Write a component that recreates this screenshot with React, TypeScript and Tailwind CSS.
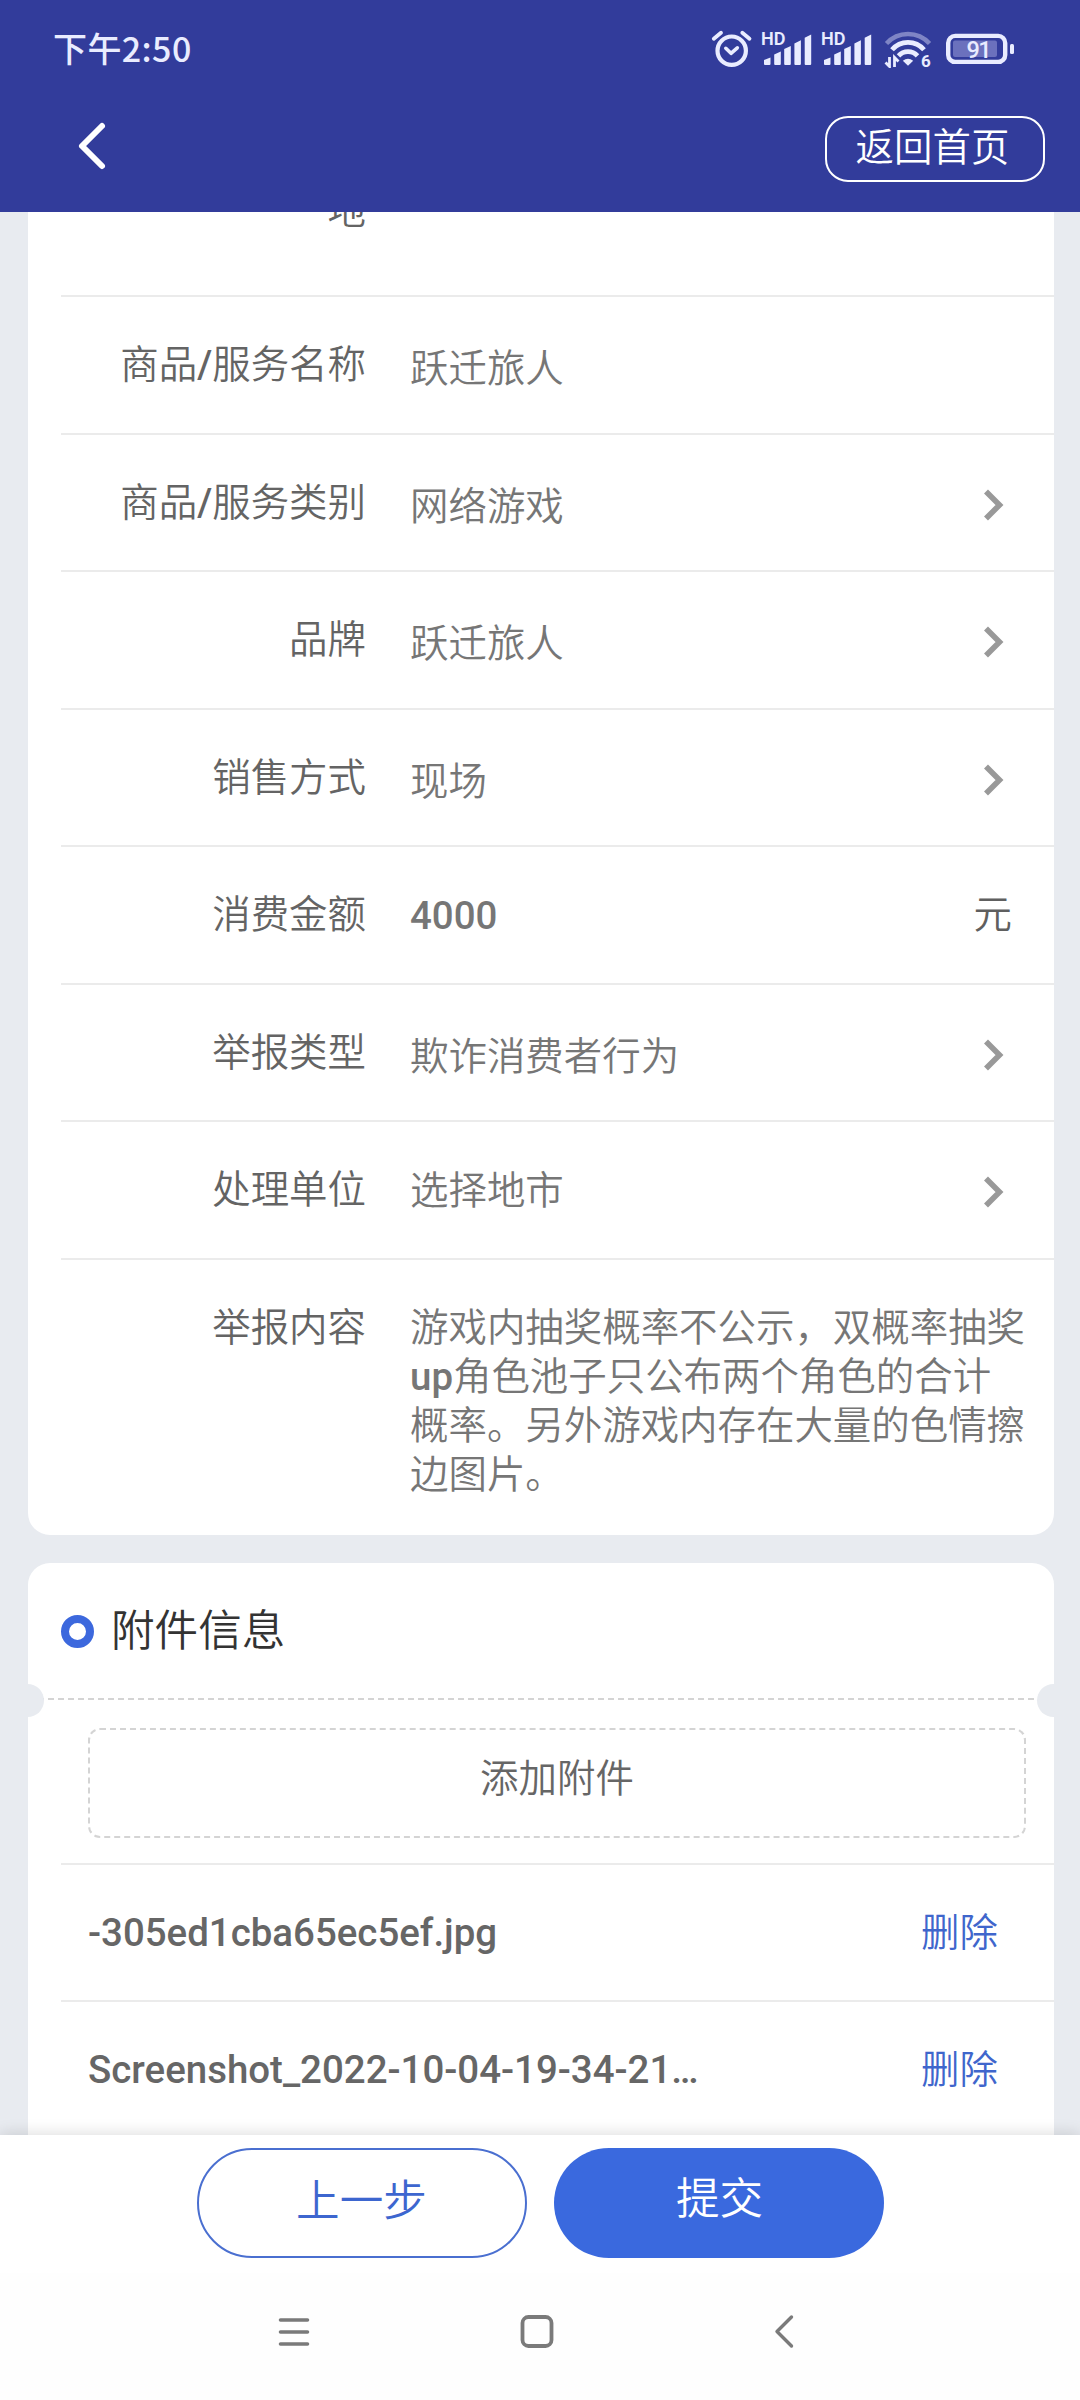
import type { ReactNode } from 'react'

interface Field {
  label: ReactNode
  value: ReactNode
  type: 'text' | 'select' | 'amount'
  raised?: boolean
}

const fields: Field[] = [
  {
    label: <>商品<span className="font-medium">/</span>服务名称</>,
    value: '跃迁旅人',
    type: 'text',
  },
  {
    label: <>商品<span className="font-medium">/</span>服务类别</>,
    value: '网络游戏',
    type: 'select',
  },
  { label: '品牌', value: '跃迁旅人', type: 'select' },
  { label: '销售方式', value: '现场', type: 'select' },
  { label: '消费金额', value: <span className="font-medium">4000</span>, type: 'amount', raised: true },
  { label: '举报类型', value: '欺诈消费者行为', type: 'select' },
  { label: '处理单位', value: '选择地市', type: 'select', raised: true },
]

const files = ['-305ed1cba65ec5ef.jpg', 'Screenshot_2022-10-04-19-34-21-123.jpg']

function Signal() {
  return (
    <svg width="60" height="40" viewBox="0 0 60 40" fill="#e9ecff">
      <text x="1" y="17.3" fontSize="17.5" fontWeight="600" textLength="24.5" lengthAdjust="spacingAndGlyphs">HD</text>
      <path d="M4 32 L10.5 29.5 V36 Q10.5 37 9.5 37 H5 Q4 37 4 36Z" />
      <path d="M14.2 26.5 L20.8 23.5 V36 Q20.8 37 19.8 37 H15.2 Q14.2 37 14.2 36Z" />
      <path d="M24.2 21 L30.8 18 V36 Q30.8 37 29.8 37 H25.2 Q24.2 37 24.2 36Z" />
      <path d="M34.4 15.5 L40.9 12.3 V36 Q40.9 37 39.9 37 H35.4 Q34.4 37 34.4 36Z" />
      <path d="M44.7 9.8 L51.2 6.5 V36 Q51.2 37 50.2 37 H45.7 Q44.7 37 44.7 36Z" />
    </svg>
  )
}

function StatusBar() {
  return (
    <div className="flex h-[100px] items-start justify-between pl-[53px] pr-[64px] pt-[28px] text-[#e9ecff]">
      <div className="-mt-[2px] font-['Noto_Sans_CJK_SC',sans-serif] text-[34px] font-medium leading-[44px] tracking-[0.4px]">
        下午2:50
      </div>
      <div className="flex">
        <svg width="50" height="40" viewBox="0 0 50 40" fill="none" stroke="#e9ecff" strokeLinecap="round">
          <circle cx="21.7" cy="22.7" r="14.2" strokeWidth="4.2" />
          <path d="M15.8 20.3 L21 25.3 L27.3 19.8" strokeWidth="3.6" strokeLinejoin="round" />
          <path d="M3.8 10.8 L11 4.8 M39.5 10.8 L32.3 4.8" strokeWidth="3.8" />
        </svg>
        <Signal />
        <Signal />
        <svg width="64" height="40" viewBox="0 0 64 40" fill="none" stroke="#e9ecff">
          <path d="M6.5 15.5 A29 29 0 0 1 49.5 15.5" strokeWidth="4.4" opacity="0.42" />
          <path d="M12 21.8 A21 21 0 0 1 44 21.8" strokeWidth="4.8" />
          <path d="M18.5 27.8 A13 13 0 0 1 37.5 27.8" strokeWidth="4.8" />
          <path d="M22.8 32.8 Q28 28.6 33.2 32.8 L28 37.8Z" fill="#e9ecff" stroke="none" />
          <path d="M9.5 29 V38.5 L5.5 34.5 M14.5 39 V29.5 L18.5 33.5" strokeWidth="2.8" />
          <text x="41" y="39" fontSize="17" fontWeight="700" fill="#e9ecff" stroke="none">6</text>
        </svg>
        <svg width="72" height="40" viewBox="0 0 72 40">
          <rect x="4.2" y="7.9" width="57" height="26" rx="7" fill="none" stroke="#e9ecff" strokeWidth="4.4" />
          <rect x="9" y="12.6" width="44" height="16.5" rx="2" fill="#6b71bd" />
          <rect x="66" y="16" width="4" height="10" rx="1.5" fill="#e9ecff" />
          <text x="22.5" y="30" fontSize="23.5" fontWeight="500" textLength="25" fill="#e9ecff">91</text>
        </svg>
      </div>
    </div>
  )
}

function ArrowRight() {
  return (
    <svg width="20" height="32" viewBox="0 0 20 32" fill="none" stroke="#999" strokeWidth="5.6">
      <path d="M2 2.5 L15.5 16 L2 29.5" />
    </svg>
  )
}

function Label({ children }: { children: ReactNode }) {
  return <div className="w-[305px] shrink-0 text-right text-[#646464]">{children}</div>
}

function Trailing({ type }: { type: Field['type'] }) {
  if (type === 'select') {
    return (
      <div className="pr-[50px] pt-[11px]">
        <ArrowRight />
      </div>
    )
  }
  if (type === 'amount') return <div className="pr-[42px] text-[#5f5f5f]">元</div>
  return null
}

export default function App() {
  return (
    <div className="flex h-[2400px] w-[1080px] flex-col overflow-hidden bg-[#e8ebf0] font-[Roboto,'Noto_Sans_CJK_SC',sans-serif] text-[38.45px] font-[350] leading-[49px]">
      {/* 顶部栏 */}
      <header className="h-[212px] shrink-0 bg-[#323c9b]">
        <StatusBar />
        <div className="flex items-start justify-between pl-[76px] pr-[35px] pt-[16px]">
          <button className="pt-[5px]">
            <svg width="32" height="50" viewBox="0 0 32 50" fill="none" stroke="#fff" strokeWidth="6" strokeLinecap="round" strokeLinejoin="round">
              <path d="M26 5 L6 25 L26 45" />
            </svg>
          </button>
          <button className="h-[66px] w-[220px] rounded-[23px] border-2 border-white pb-[3px] pr-[5px] leading-[59px] text-white">
            返回首页
          </button>
        </div>
      </header>

      <main className="flex min-h-0 flex-1 flex-col gap-[28px] overflow-hidden pl-[28px] pr-[26px]">
        {/* 举报信息 */}
        <section className="h-[1323px] shrink-0 rounded-b-[22px] bg-white pl-[33px]">
          <div className="flex h-[85px] items-end border-b-2 border-[#ebebeb] pb-[60px]">
            <Label>地</Label>
          </div>
          {fields.map((field, i) => (
            <div key={i} className="flex h-[137.5px] border-b-2 border-[#ebebeb] pt-[43px]">
              <Label>{field.label}</Label>
              <div className={field.raised ? 'flex-1 pl-[44px] pt-px text-[#767676]' : 'flex-1 pl-[44px] pt-1 text-[#767676]'}>
                {field.value}
              </div>
              <Trailing type={field.type} />
            </div>
          ))}
          <div className="flex pt-[43px]">
            <Label>举报内容</Label>
            <p className="ml-[44px] w-[616px] text-[#767676]">
              游戏内抽奖概率不公示，双概率抽奖<span className="font-medium">up</span>角色池子只公布两个角色的合计概率。另外游戏内存在大量的色情擦边图片。
            </p>
          </div>
        </section>

        {/* 附件信息 */}
        <section className="h-[700px] shrink-0 rounded-t-[22px] bg-white">
          <div className="relative flex h-[137px] items-center gap-[17px] border-b-2 border-dashed border-[#d4d4d4] pl-[33px] pt-px">
            <span className="size-[33px] rounded-full border-8 border-[#3c68dd]" />
            <h2 className="text-[43.6px] text-[#333]">附件信息</h2>
            <span className="absolute -left-[20px] bottom-[-19px] h-[33px] w-[36px] rounded-r-full bg-[#e8ebf0]" />
            <span className="absolute -right-[20px] bottom-[-19px] h-[33px] w-[37px] rounded-l-full bg-[#e8ebf0]" />
          </div>
          <div className="pl-[33px]">
            <div className="h-[165px] border-b-2 border-[#ebebeb] pl-[27px] pr-[28px] pt-[28px]">
              <button className="h-[110px] w-full rounded-xl border-2 border-dashed border-[#d4d4d4] pb-[10px] text-[#666]">
                添加附件
              </button>
            </div>
            {files.map((name) => (
              <div key={name} className="flex h-[137px] justify-between border-b-2 border-[#ebebeb] pl-[27px] pr-[56px] pt-[43px]">
                <span className="w-[612px] truncate font-medium text-[#666]">{name}</span>
                <button className="self-start text-[#3f66cc]">删除</button>
              </div>
            ))}
          </div>
        </section>
      </main>

      {/* 底部操作 */}
      <div className="z-10 flex h-[138px] shrink-0 justify-center gap-[27px] bg-white pt-[13px] text-[43.6px] shadow-[0_-2px_14px_rgba(0,0,0,0.13)]">
        <button className="h-[110px] w-[330px] rounded-full border-2 border-[#4a6fd0] pb-[3px] text-[#3d66cf]">上一步</button>
        <button className="h-[110px] w-[330px] rounded-full bg-[#3a69de] pb-[8px] pl-[2px] text-white">提交</button>
      </div>

      {/* 系统导航 */}
      <nav className="z-20 flex h-[127px] shrink-0 items-start justify-between bg-[#fefefe] pl-[276px] pr-[284px] pt-[41px]">
        <svg width="36" height="36" viewBox="0 0 36 36" stroke="#7a7a7a" strokeWidth="3.6" strokeLinecap="round">
          <path d="M4.5 6 H31.5 M4.5 18 H31.5 M4.5 30 H31.5" />
        </svg>
        <svg className="-ml-[11px]" width="36" height="36" viewBox="0 0 36 36" fill="none" stroke="#7a7a7a" strokeWidth="3.8">
          <rect x="3.5" y="3" width="29" height="29" rx="6" />
        </svg>
        <svg width="24" height="36" viewBox="0 0 24 36" fill="none" stroke="#7a7a7a" strokeWidth="3.4" strokeLinecap="round" strokeLinejoin="round">
          <path d="M19.5 3 L5 17.5 L19.5 32" />
        </svg>
      </nav>
    </div>
  )
}
